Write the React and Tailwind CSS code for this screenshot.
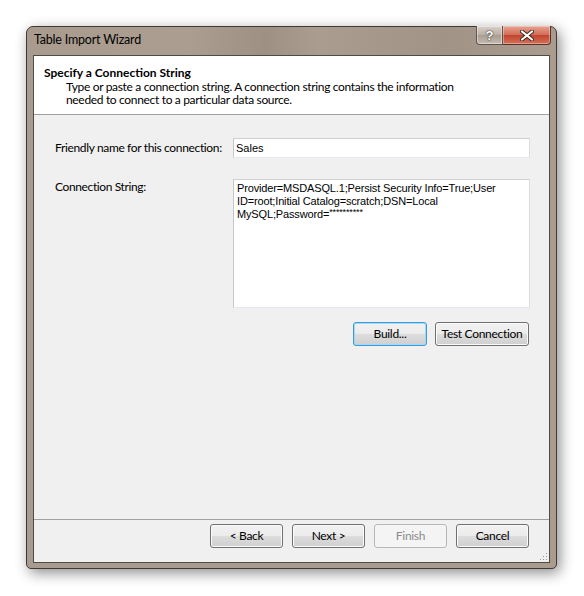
import React from 'react';

const ui = { fontFamily: 'Lato, "Liberation Sans", sans-serif' };
const ms = { fontFamily: '"Liberation Sans", Arial, sans-serif' };

function WinButton({ children, width = 'w-[73px]', focused, disabled }) {
  const border = disabled
    ? 'border-[#b5b8bb]'
    : focused
    ? 'border-[#3c9bdc] shadow-[inset_0_0_0_1px_#9fd9f6]'
    : 'border-[#707070] shadow-[inset_0_0_0_1px_#fbfbfb]';
  const bg = disabled
    ? 'bg-[#f4f4f4]'
    : 'bg-[linear-gradient(#f2f2f2_0%,#ebebeb_50%,#dddddd_50%,#cfcfcf_100%)]';
  return (
    <button
      className={`${width} h-[24px] rounded-[3px] border ${border} ${bg} text-[12px] tracking-[-0.3px] leading-none ${
        disabled ? 'text-[#8b8b8b]' : 'text-black'
      } flex items-center justify-center`}
      style={ui}
    >
      {children}
    </button>
  );
}

function CaptionButtons() {
  return (
    <div className="flex h-[19px] -mt-px">
      <div className="w-[27px] h-full rounded-bl-[4px] border border-t-0 border-[#5d554d] bg-[linear-gradient(#d9d2cb,#b9aea3_50%,#a89c90_50%,#c5bbb1)] flex items-center justify-center shadow-[inset_0_0_0_1px_rgba(255,255,255,0.45)]">
        <span className="text-[13px] font-bold text-white leading-none [text-shadow:0_0_1px_#333,0_0_2px_#333]" style={ms}>?</span>
      </div>
      <div className="w-[48px] h-full rounded-br-[4px] border border-t-0 border-l-0 border-[#5d3027] bg-[linear-gradient(#e8a493,#d16b56_50%,#c2432b_50%,#d4705a)] flex items-center justify-center shadow-[inset_0_0_0_1px_rgba(255,255,255,0.35)]">
        <svg width="14" height="11" viewBox="0 0 14 11">
          <path d="M2 1.5 L12 9.5 M12 1.5 L2 9.5" stroke="#3a2a26" strokeWidth="4" strokeLinecap="round" />
          <path d="M2 1.5 L12 9.5 M12 1.5 L2 9.5" stroke="#ffffff" strokeWidth="2.2" strokeLinecap="round" />
        </svg>
      </div>
    </div>
  );
}

const field = 'border border-t-[#cfd0d2] border-l-[#c6c7c9] border-r-[#dcdde0] border-b-[#e3e9ef] bg-white';

export default function App() {
  return (
    <div className="w-[584px] h-[596px] bg-white pt-[26px] pl-[26px]">
      <div className="w-[531px] h-[543px] rounded-t-[7px] rounded-b-[5px] border border-[#3f3a35] bg-[#a99b8d] shadow-[3px_4px_14px_rgba(0,0,0,0.45)] flex flex-col px-[6px] pb-[5px]">
        {/* title bar */}
        <div className="h-[28px] flex items-start justify-between bg-[linear-gradient(90deg,#a99b8d_0%,#ab9e91_30%,#9e9184_45%,#aa9d90_55%,#a19487_80%,#a99b8d_100%)]">
          <span className="pt-[7px] pl-px text-[12.5px] text-black leading-none tracking-[-0.2px]" style={ui}>
            Table Import Wizard
          </span>
          <div className="-mr-[1px]">
            <CaptionButtons />
          </div>
        </div>

        {/* client area */}
        <div className="flex-1 border border-[#4f4a45] bg-[#f0f0f0] flex flex-col">
          <div className="h-[59px] bg-white border-b border-[#a0a0a0] pl-[10px] pt-[9px]" style={ui}>
            <div className="text-[12px] font-bold text-black leading-[15px]">Specify a Connection String</div>
            <div className="pl-[22px] text-[12px] text-black leading-[13px] tracking-[-0.33px]">
              <div>Type or paste a connection string. A connection string contains the information</div>
              <div>needed to connect to a particular data source.</div>
            </div>
          </div>

          <div className="flex-1 pl-[21px] pr-[19px] pt-[23px]" style={ui}>
            <div className="flex items-center">
              <div className="w-[178px] shrink-0 text-[12px] text-black tracking-[-0.35px] whitespace-nowrap">Friendly name for this connection:</div>
              <div className={`flex-1 h-[20px] ${field} px-[2px] flex items-center text-[11px] text-black`} style={ms}>
                Sales
              </div>
            </div>
            <div className="flex items-start mt-[21px]">
              <div className="w-[178px] shrink-0 text-[12px] text-black tracking-[-0.38px] -mt-[1px]">Connection String:</div>
              <div className={`flex-1 h-[129px] ${field} px-[3px] pt-[2px] text-[11px] leading-[13px] text-black tracking-[-0.15px]`} style={ms}>
                <div>Provider=MSDASQL.1;Persist Security Info=True;User</div>
                <div>ID=root;Initial Catalog=scratch;DSN=Local</div>
                <div>MySQL;Password=<span className="align-top text-[9px] leading-[9px]">**********</span></div>
              </div>
            </div>
            <div className="flex justify-end gap-[8px] mt-[14px] pr-px">
              <WinButton width="w-[74px]" focused>Build...</WinButton>
              <WinButton width="w-[94px]">Test Connection</WinButton>
            </div>
          </div>

          <div className="h-[43px] border-t border-[#a0a0a0] flex items-start justify-end gap-[9px] pt-[4px] pr-[20px] relative">
            <WinButton>&lt; Back</WinButton>
            <WinButton>Next &gt;</WinButton>
            <WinButton disabled>Finish</WinButton>
            <WinButton>Cancel</WinButton>
            <svg className="absolute right-[1px] bottom-[1px]" width="10" height="10" viewBox="0 0 10 10">
              {[[8, 2], [8, 5], [5, 5], [8, 8], [5, 8], [2, 8]].map(([x, y], i) => (
                <rect key={i} x={x} y={y} width="1" height="1" fill="#9a9a9a" />
              ))}
            </svg>
          </div>
        </div>
      </div>
    </div>
  );
}
